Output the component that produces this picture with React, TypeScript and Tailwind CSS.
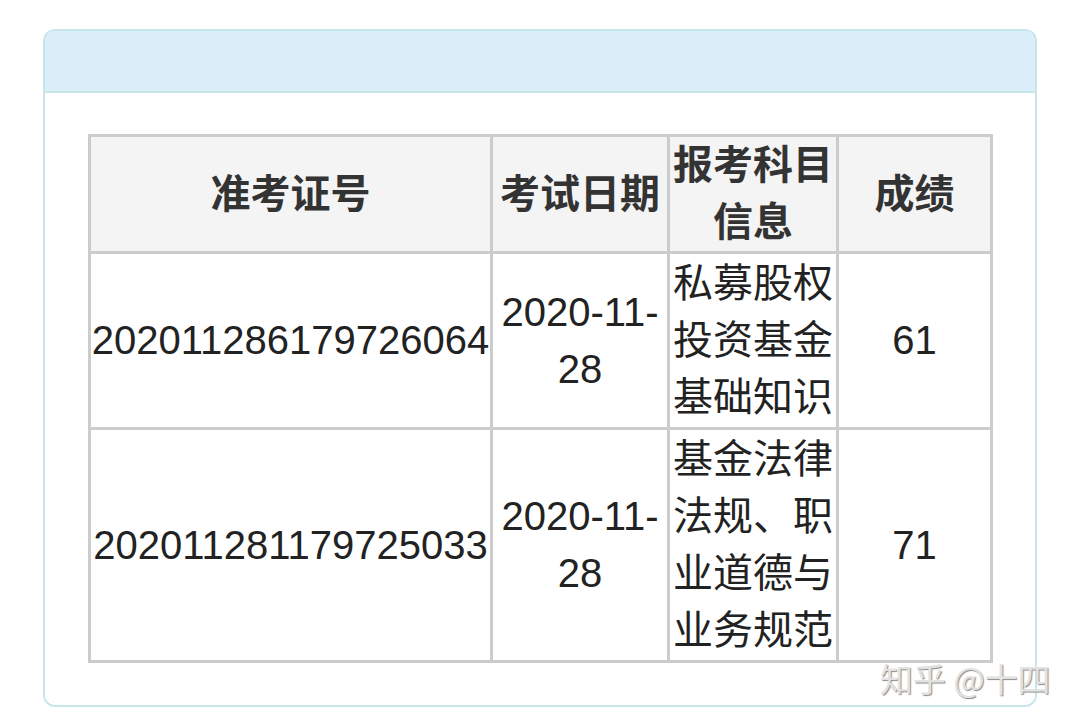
const rows = [
  {
    id: "202011286179726064",
    subject: "私募股权投资基金基础知识",
    score: "61",
  },
  {
    id: "202011281179725033",
    subject: "基金法律法规、职业道德与业务规范",
    score: "71",
  },
];

export default function App() {
  return (
    <div className="relative w-[1080px] h-[723px] bg-white overflow-hidden font-['Liberation_Sans','Noto_Sans_CJK_SC',sans-serif]">
      <div className="ml-[43px] mt-[29px] w-[994px] h-[678px] rounded-[12px] border-2 border-[#c6e6ea] overflow-hidden flex flex-col">
        <div className="h-[62px] bg-[#d9eef8] border-b-2 border-[#c6e6ea]" />
        <div className="flex-1 bg-white pt-[41px] pl-[43px]">
          <table className="table-fixed border-collapse w-[902px] text-[40px] leading-[57px] text-[#222]">
            <colgroup>
              <col className="w-[402px]" />
              <col className="w-[177px]" />
              <col className="w-[169px]" />
              <col className="w-[154px]" />
            </colgroup>
            <thead>
              <tr className="bg-[#f4f4f4] h-[117px]">
                <th className="border-[3px] border-[#cccccc] font-bold text-[#333] p-0">准考证号</th>
                <th className="border-[3px] border-[#cccccc] font-bold text-[#333] p-0">考试日期</th>
                <th className="border-[3px] border-[#cccccc] font-bold text-[#333] p-0">报考科目信息</th>
                <th className="border-[3px] border-[#cccccc] font-bold text-[#333] p-0">成绩</th>
              </tr>
            </thead>
            <tbody>
              {rows.map((r) => (
                <tr key={r.id}>
                  <td className="border-[3px] border-[#cccccc] text-center px-0 py-[1px] whitespace-nowrap">{r.id}</td>
                  <td className="border-[3px] border-[#cccccc] text-center px-0 py-[1px]">
                    2020-11-
                    <br />
                    28
                  </td>
                  <td className="border-[3px] border-[#cccccc] text-center px-0 py-[1px] break-all">{r.subject}</td>
                  <td className="border-[3px] border-[#cccccc] text-center px-0 py-[1px]">{r.score}</td>
                </tr>
              ))}
            </tbody>
          </table>
        </div>
      </div>
      <div className="absolute left-[880px] top-[658px] text-[33px] leading-[40px] text-[#e2e2e2] font-['Noto_Sans_CJK_SC',sans-serif] [text-shadow:1px_1px_1px_#8a8a8a]">
        知乎 @十四
      </div>
    </div>
  );
}
